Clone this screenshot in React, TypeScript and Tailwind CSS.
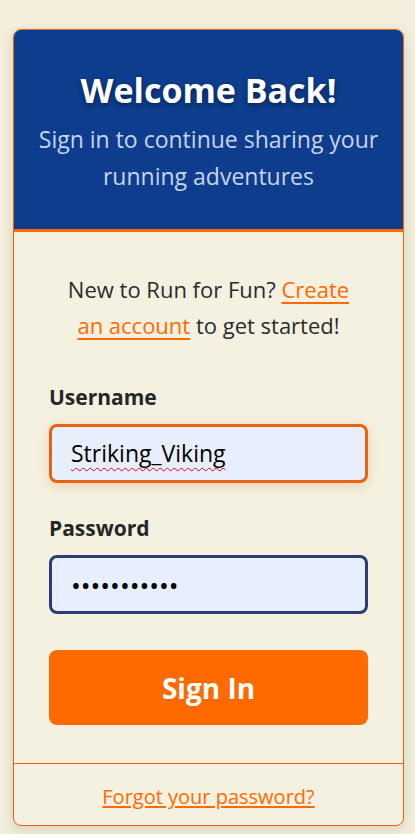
const App = () => {
  return (
    <div
      className="min-h-screen bg-[#f3efdc] px-[13px] pt-[29px] pb-[10px]"
      style={{ fontFamily: '"Open Sans", "Noto Sans", sans-serif' }}
    >
      <div className="w-[391px] rounded-lg overflow-hidden border border-[#f0600a] bg-[#f5f1e1] shadow-[0_4px_14px_rgba(0,0,0,0.12)]">
        <div className="bg-[#0e3d8e] border-b-[3px] border-[#ff6a00] px-5 pt-[38px] pb-[34px] text-center">
          <h1 className="text-[34px] leading-[44px] font-bold text-white [text-shadow:0_2px_5px_rgba(0,0,0,0.45)]">
            Welcome Back!
          </h1>
          <p className="mt-[9px] text-[23px] leading-[37px] text-[#c8d4ec]">
            Sign in to continue sharing your running adventures
          </p>
        </div>

        <div className="px-[35px] pt-[39px] pb-[38px]">
          <p className="text-center text-[22px] leading-[36px] text-[#2b2b2b] px-2">
            New to Run for Fun?{" "}
            <a href="#" className="text-[#ff6a00] underline underline-offset-4">
              Create an account
            </a>{" "}
            to get started!
          </p>

          <label className="block mt-[40px] mb-[13px] text-[21px] leading-[28px] font-bold text-[#262626]">
            Username
          </label>
          <div className="w-full h-[59px] flex items-center rounded-lg border-[3px] border-[#e8620f] bg-[#e8effc] px-[19px] shadow-[0_3px_12px_rgba(200,120,40,0.25)]">
            <span className="text-[23px] text-black underline decoration-wavy decoration-red-600 decoration-1 underline-offset-[5px]">
              Striking_Viking
            </span>
          </div>

          <label className="block mt-[31px] mb-[13px] text-[21px] leading-[28px] font-bold text-[#262626]">
            Password
          </label>
          <div className="w-full h-[59px] flex items-center rounded-lg border-[3px] border-[#2c3d75] bg-[#e8effc] px-[19px]">
            <span className="text-[26px] leading-none text-black">•••••••••••</span>
          </div>

          <button className="mt-[36px] w-full h-[75px] rounded-lg bg-[#ff6a00] text-white text-[28px] font-bold">
            Sign In
          </button>
        </div>

        <div className="border-t border-[#f0600a] pt-[21px] pb-[15px] text-center">
          <a href="#" className="text-[20px] leading-[24px] text-[#ff6a00] underline underline-offset-2">
            Forgot your password?
          </a>
        </div>
      </div>
    </div>
  );
};

export default App;
